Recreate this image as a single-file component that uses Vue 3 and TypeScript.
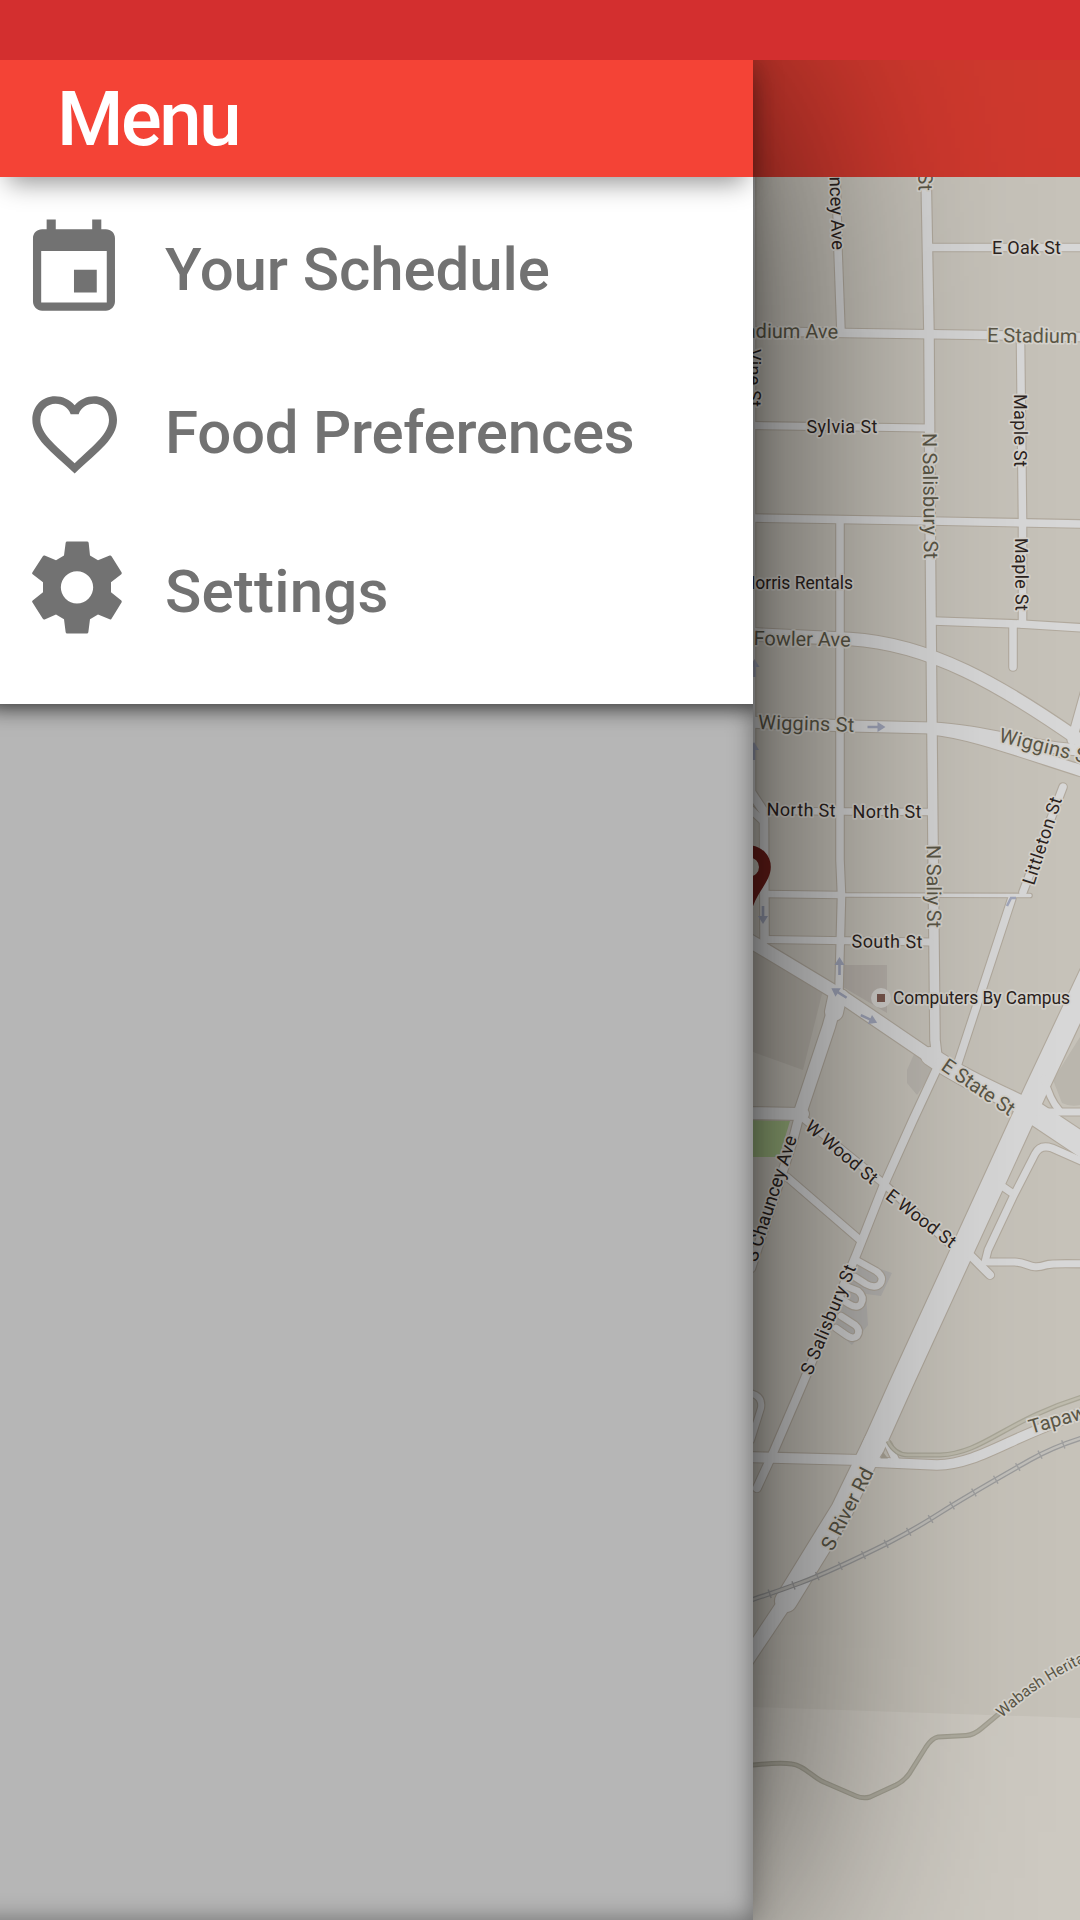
<script setup lang="ts">
interface Road {
  d: string
  w: number
}

interface Label {
  text: string
  x: number
  y: number
  rotate?: number
  size?: number
  length?: number
  major?: boolean
  end?: boolean
}

interface Arrow {
  x: number
  y: number
  rotate: number
}

const roads: Road[] = [
  { d: 'M751 170V792L764 812L764.500 940', w: 8.500 },
  { d: 'M747 806L764 822', w: 7 },
  { d: 'M836 170L838 250L841 332', w: 7.500 },
  { d: 'M926 170L929 335L930 500L931 620L933 845L935 1040L938 1066', w: 9.500 },
  { d: 'M928 247.500H1085', w: 7.500 },
  { d: 'M745 331L845 333L985 335L1085 337', w: 8.500 },
  { d: 'M1020.500 338L1022.500 520V624', w: 7.500 },
  { d: 'M751 425.500L928 428', w: 7 },
  { d: 'M751 518L930 521L1085 524', w: 7.500 },
  { d: 'M840 520L840 860L841.500 895L839 990', w: 7.500 },
  { d: 'M933 621L1020 624L1085 628', w: 7.500 },
  { d: 'M1013 626V667', w: 7.500 },
  { d: 'M745 634L850 639C930 644 1000 684 1085 744', w: 12.500 },
  { d: 'M1086 690L1072 740', w: 9 },
  { d: 'M745 722L850 726L932 728C985 730 1040 750 1085 750', w: 11 },
  { d: 'M932 729C970 733 1010 748 1085 772', w: 11 },
  { d: 'M765 811L930 812', w: 6.500 },
  { d: 'M765 894L842 895', w: 6.500 },
  { d: 'M842 895L1030 895.500', w: 3.500 },
  { d: 'M765 939.500L930 942', w: 7 },
  { d: 'M745 938L838 994L935 1060', w: 13 },
  { d: 'M837 998L834 1012', w: 18 },
  { d: 'M930 1056C965 1080 1000 1094 1036 1112', w: 18 },
  { d: 'M1030 1110Q1060 1130 1090 1150', w: 23 },
  { d: 'M842 996Q834 1006 829 1026L801 1110', w: 12.500 },
  { d: 'M802 1105L793 1140L751 1268', w: 8.500 },
  { d: 'M745 1113L803 1114', w: 12 },
  { d: 'M1063 787L1023 892', w: 7.500 },
  { d: 'M1012 898L957 1066', w: 7.500 },
  { d: 'M940 1062L913 1120L883 1187L857 1253L803 1383L773 1453L757 1488', w: 8 },
  { d: 'M803 1118L883 1183L953 1247', w: 7 },
  { d: 'M787 1177L860 1240', w: 7 },
  { d: 'M1102 950L1036 1090L903 1380L873 1447', w: 22.500 },
  { d: 'M875 1442L842 1510L813 1557L786 1601', w: 22 },
  { d: 'M784 1604L768 1628L740 1670', w: 14 },
  { d: 'M745 1457L860 1460', w: 10 },
  { d: 'M870 1462L937 1465C980 1464 1010 1436 1085 1412', w: 9.500 },
  { d: 'M888 1444L897 1463', w: 7 },
  { d: 'M1086 1163L1052 1148Q1040 1144 1035 1154L1013 1197L988 1250L985 1262', w: 7 },
  { d: 'M999 1184L1012 1193', w: 7 },
  { d: 'M971 1256L990 1275', w: 8 },
  { d: 'M988 1262H1015C1030 1263 1030 1270 1046 1265Q1052 1263 1085 1264', w: 7 },
  { d: 'M1044 1078Q1050 1100 1059 1110', w: 6.500 },
  { d: 'M1040 1112H1085', w: 7 },
  { d: 'M858 1261L876 1271Q885 1277 880 1284Q875 1289 866 1284L855 1277', w: 6.500 },
  { d: 'M848 1287L858 1291Q865 1297 861 1304Q857 1309 849 1304L841 1299', w: 6.500 },
  { d: 'M841 1316L855 1325Q861 1330 857 1336Q853 1340 846 1335L836 1328', w: 6.500 },
  { d: 'M750 1393Q763 1396 761 1408L751 1440', w: 6 },
]

const labels: Label[] = [
  { text: 'N Chauncey Ave', x: 832, y: 250, rotate: 88, size: 18.500, end: true },
  { text: 'N Salisbury St', x: 918.500, y: 191, rotate: 89, size: 20, major: true, end: true },
  { text: 'E Oak St', x: 992, y: 254, length: 69 },
  { text: 'E Stadium Ave', x: 838, y: 338.500, rotate: 0.500, size: 20, major: true, end: true },
  { text: 'E Stadium Ave', x: 987, y: 342, rotate: 0.700, size: 20, major: true },
  { text: 'Vine St', x: 748, y: 349, rotate: 90, length: 58 },
  { text: 'Sylvia St', x: 806.500, y: 433, length: 71 },
  { text: 'N Salisbury St', x: 922.500, y: 433, rotate: 89.300, size: 20, length: 126, major: true },
  { text: 'Maple St', x: 1014, y: 394, rotate: 90, length: 73 },
  { text: 'Maple St', x: 1015, y: 538, rotate: 89.500, length: 73 },
  { text: 'Morris Rentals', x: 853, y: 589, size: 17.500, end: true },
  { text: 'Fowler Ave', x: 753.500, y: 645, rotate: 1, size: 20, length: 97, major: true },
  { text: 'Wiggins St', x: 758, y: 729, rotate: 1.700, size: 20, length: 96, major: true },
  { text: 'Wiggins St', x: 998, y: 741.500, rotate: 14, size: 20, length: 97, major: true },
  { text: 'North St', x: 766.500, y: 815.500, rotate: 1, length: 69 },
  { text: 'North St', x: 852.500, y: 818, length: 69 },
  { text: 'Littleton St', x: 1034, y: 886, rotate: -72, length: 91 },
  { text: 'N Saliy St', x: 926.500, y: 845, rotate: 89.500, size: 20, length: 83, major: true },
  { text: 'South St', x: 851.500, y: 947.500, rotate: 0.500, length: 71 },
  { text: 'Computers By Campus', x: 893, y: 1003.500, size: 17.500, length: 177 },
  { text: 'E State St', x: 940, y: 1069, rotate: 34.500, size: 20, length: 84, major: true },
  { text: 'W Wood St', x: 804, y: 1128.500, rotate: 40, length: 88 },
  { text: 'E Wood St', x: 884.500, y: 1198, rotate: 37.500, length: 83 },
  { text: 'S Chauncey Ave', x: 797, y: 1138, rotate: -72, size: 18.500, end: true },
  { text: 'S Salisbury St', x: 811.500, y: 1376, rotate: -67.500, length: 117 },
  { text: 'S River Rd', x: 832.500, y: 1552, rotate: -62.500, size: 20, length: 90, major: true },
  { text: 'Tapawingo Dr', x: 1031, y: 1434, rotate: -16, size: 20, major: true },
]

const arrows: Arrow[] = [
  { x: 876.500, y: 727, rotate: 0 },
  { x: 839.500, y: 966, rotate: -90 },
  { x: 763, y: 915, rotate: 90 },
  { x: 839, y: 993, rotate: 212 },
  { x: 869, y: 1019, rotate: 25 },
  { x: 754.500, y: 668, rotate: -90 },
  { x: 754, y: 751, rotate: -90 },
]

const railPath =
  'M745 1602Q770 1594 800 1583T890 1542Q915 1529 940 1513T1030 1460Q1055 1446 1085 1437'
const trailPath =
  'M745 1766Q778 1762 792 1764C804 1765 814 1779 826 1783L856 1796Q863 1799 870 1797L896 1785Q904 1781 909 1774L926 1747Q932 1738 938 1737L966 1735.500Q974 1735 982 1728L1000 1713'

const transform = (l: { x: number; y: number; rotate?: number }) =>
  `translate(${l.x} ${l.y}) rotate(${l.rotate ?? 0})`
</script>

<template>
  <div class="screen">
    <div class="status-bar"></div>
    <div class="stage">
      <aside class="drawer">
        <header class="drawer-header">Menu</header>
        <nav class="menu">
          <a class="item">
            <svg class="icon" viewBox="-.07 0 24.15 24.15">
              <path
                fill-rule="evenodd"
                d="M17 12h-5v5h5zM16 1v2.150H8V1H6v2.150H5C3.900 3.150 3 4 3 5.100V19c0 1.100.9 2 2 2h14c1.100 0 2-.9 2-2V5.100c0-1.100-.9-1.950-2-1.950h-1V1zM19.200 19.200H4.800V7.900H19.200z"
              />
            </svg>
            <span>Your Schedule</span>
          </a>
          <a class="item food">
            <svg class="icon" viewBox="57 22.500 330 330">
              <path
                fill-rule="evenodd"
                d="M224 309C150 240 97 204 97 148C97 106 127 77 165 77C188 77 210 87 224 104C238 87 260 77 283 77C321 77 351 106 351 148C351 204 298 240 224 309ZM224 278C285 222 327 188 327 148C327 120 307 100 281 100C261 100 243 112 236 131H212C205 112 187 100 167 100C141 100 121 120 121 148C121 188 163 222 224 278Z"
              />
            </svg>
            <span>Food Preferences</span>
          </a>
          <a class="item last">
            <svg class="icon" viewBox="57 499.500 330 330">
              <path
                fill-rule="evenodd"
                d="M201 513H261Q265 513 266 517L270 555L294 569L329 555Q333 554 335 558L365 606Q366 609 364 611L333 635V665L364 690Q366 692 365 695L335 744Q333 748 329 746L294 732L270 746L265 785Q264 789 261 789H201Q198 789 197 785L192 746L168 732L134 747Q130 748 128 744L97 695Q95 692 98 690L129 665V635L98 611Q95 609 97 606L128 558Q130 554 134 555L168 569L192 555L197 517Q198 513 201 513ZM231 602A48.500 48.500 0 1 0 231 699A48.500 48.500 0 1 0 231 602Z"
              />
            </svg>
            <span>Settings</span>
          </a>
        </nav>
        <div class="drawer-rest"></div>
      </aside>

      <main class="content">
        <div class="app-bar"></div>
        <svg class="map" viewBox="753 177 327 1743" width="327" height="1743">
          <rect x="753" y="177" width="327" height="1743" fill="#c7c3ba" />
          <path d="M753 1707L870 1711L1080 1718V1920H753Z" fill="#cecac2" />
          <path d="M753 948L823 990L803 1070L753 1052Z" fill="#bcb7ae" />
          <path d="M843 965H887V1013L843 987Z" fill="#bab4ad" />
          <path d="M915 1052L907 1070V1083L917 1095L937 1066Z" fill="#bbb7b0" />
          <path d="M1080 1037L1053 1080L1062 1103Q1070 1107 1080 1105Z" fill="#bbb7ae" />
          <path d="M860 1262L892 1273L881 1296L866 1294L868 1325L852 1345L832 1328Z" fill="#bab8b5" />
          <path d="M753 1120L790 1121L779 1157H753Z" fill="#9fb881" />

          <g class="casing">
            <path v-for="(r, i) in roads" :key="i" :d="r.d" :stroke-width="r.w + 2.200" />
          </g>
          <g class="road">
            <path v-for="(r, i) in roads" :key="i" :d="r.d" :stroke-width="r.w" />
          </g>

          <path d="M883 1452L888 1458.500H880.500Z" fill="#aaa497" />
          <path
            d="M888 1441Q895 1455 908 1455H940C985 1453 1005 1420 1085 1396"
            fill="none"
            stroke="#aaa798"
            stroke-width="5"
          />
          <path
            d="M888 1441Q895 1455 908 1455H940C985 1453 1005 1420 1085 1396"
            fill="none"
            stroke="#bfbcae"
            stroke-width="2.500"
          />
          <path :d="railPath" fill="none" stroke="#9c9c9c" stroke-width="5" />
          <path :d="railPath" fill="none" stroke="#c2c0bb" stroke-width="2.400" />
          <path
            :d="railPath"
            fill="none"
            stroke="#a0a0a0"
            stroke-width="9"
            stroke-dasharray="1.400 24"
          />
          <path :d="trailPath" fill="none" stroke="#a29f91" stroke-width="5" />
          <path :d="trailPath" fill="none" stroke="#b0ada0" stroke-width="2.500" />

          <path
            v-for="(a, i) in arrows"
            :key="'a' + i"
            :transform="transform(a)"
            d="M-9 -1.300H1V-5L9 0L1 5V1.300H-9Z"
            fill="#a0a5b9"
          />
          <path d="M1007 906L1011 898H1016" fill="none" stroke="#a0a5b9" stroke-width="2.500" />

          <circle cx="881" cy="998" r="10" fill="#d5d3cf" />
          <rect x="877" y="994" width="8" height="8" fill="#7d5a50" />

          <text
            v-for="(l, i) in labels"
            :key="'l' + i"
            class="label"
            :class="{ major: l.major }"
            :transform="transform(l)"
            :font-size="l.size ?? 18"
            :textLength="l.length"
            :text-anchor="l.end ? 'end' : 'start'"
          >{{ l.text }}</text>
          <path id="heritage" d="M1002 1718Q1040 1682 1090 1660L1200 1610" fill="none" />
          <text class="label major" font-size="15.500">
            <textPath href="#heritage">Wabash Heritage Trail</textPath>
          </text>

          <path
            fill-rule="evenodd"
            fill="#6f1f1a"
            d="M749.500 845.500A21.300 21.300 0 0 1 770.800 867C770.800 882 756 892 752 910L749 920L728 867A21.300 21.300 0 0 1 749.500 845.500ZM749.500 857.500A9.500 9.500 0 1 0 749.500 876.500A9.500 9.500 0 1 0 749.500 857.500Z"
          />
        </svg>
      </main>
    </div>
  </div>
</template>

<style>
body {
  margin: 0;
}
</style>

<style scoped>
.screen {
  width: 1080px;
  height: 1920px;
  display: flex;
  flex-direction: column;
  overflow: hidden;
  font-family: Roboto, 'Liberation Sans', sans-serif;
}

.status-bar {
  flex: none;
  height: 60px;
  background: #d32f2f;
}

.stage {
  flex: 1;
  display: flex;
  overflow: hidden;
}

.drawer {
  position: relative;
  z-index: 1;
  flex: none;
  width: 753px;
  display: flex;
  flex-direction: column;
  background: #b6b6b6;
  box-shadow:
    0 0 250px rgba(0, 0, 0, 0.8),
    0 0 28px rgba(0, 0, 0, 0.3);
}

.drawer-header {
  position: relative;
  z-index: 2;
  flex: none;
  box-sizing: border-box;
  height: 117px;
  padding-left: 57px;
  line-height: 119px;
  font-size: 76px;
  font-weight: 500;
  letter-spacing: -2.4px;
  color: #fff;
  background: #f44336;
  box-shadow: 0 14px 24px -8px rgba(0, 0, 0, 0.42);
}

.menu {
  position: relative;
  z-index: 1;
  flex: none;
  box-sizing: border-box;
  height: 527px;
  padding: 11px 0 0 19px;
  display: flex;
  flex-direction: column;
  background: #fff;
  box-shadow: 0 -7px 20px 10px rgba(0, 0, 0, 0.55);
  clip-path: inset(0 0 -40px 0);
}

.item {
  display: flex;
  align-items: center;
  gap: 36px;
  height: 163px;
  font-size: 60px;
  font-weight: 500;
  letter-spacing: -0.1px;
  white-space: nowrap;
  color: #727272;
}

.item.food {
  letter-spacing: -0.25px;
}

.item.last {
  height: 155px;
  letter-spacing: 0.2px;
}

.icon {
  flex: none;
  width: 110px;
  height: 110px;
  fill: #727272;
}

.drawer-rest {
  flex: 1;
  margin-left: -30px;
  box-shadow: inset 0 0 24px rgba(0, 0, 0, 0.42);
}

.content {
  flex: 1;
  display: flex;
  flex-direction: column;
  overflow: hidden;
}

.app-bar {
  flex: none;
  height: 117px;
  background: #d0392e;
}

.map {
  display: block;
  flex: none;
}

.casing path {
  fill: none;
  stroke: #b2aa9e;
  stroke-linecap: round;
  stroke-linejoin: round;
}

.road path {
  fill: none;
  stroke: #d8d8d8;
  stroke-linecap: round;
  stroke-linejoin: round;
}

.label {
  fill: #2c2320;
  stroke: #d6d3cd;
  stroke-width: 3.500px;
  stroke-linejoin: round;
  paint-order: stroke;
}

.label.major {
  fill: #5b5747;
}
</style>
